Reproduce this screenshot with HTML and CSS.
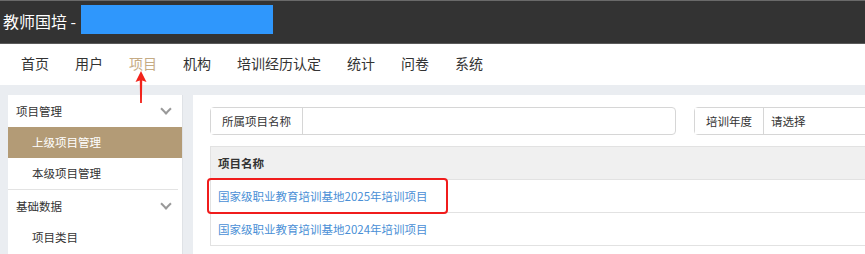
FILE: index.html
```html
<!DOCTYPE html>
<html lang="zh-CN">
<head>
    <meta charset="UTF-8">
    <title>教师国培</title>
    <link rel="stylesheet" href="styles.css">
</head>
<body>

<header class="topbar">
    <span class="brand">教师国培 -</span>
    <span class="brand-mask"></span>
</header>

<nav class="mainnav">
    <a>首页</a>
    <a>用户</a>
    <a class="active">项目
        <!-- annotation arrow -->
        <svg class="mark-arrow" width="14" height="33" viewBox="0 0 14 33">
            <path d="M7 0 L12.5 11 L8.2 9.5 L7.9 32 L6.1 32 L5.8 9.5 L1.5 11 Z" fill="#f2231b"/>
        </svg>
    </a>
    <a>机构</a>
    <a>培训经历认定</a>
    <a>统计</a>
    <a>问卷</a>
    <a>系统</a>
</nav>

<div class="page">
    <aside class="sidebar">
        <div class="group-title">项目管理 <span class="chev"></span></div>
        <div class="side-item active">上级项目管理</div>
        <div class="side-item">本级项目管理</div>
        <div class="group-title sep">基础数据 <span class="chev"></span></div>
        <div class="side-item">项目类目</div>
    </aside>

    <main class="content">
        <div class="filters">
            <div class="input-group wide">
                <span class="addon">所属项目名称</span>
                <span class="field"></span>
            </div>
            <div class="input-group">
                <span class="addon">培训年度</span>
                <span class="field select">请选择</span>
            </div>
        </div>

        <table class="grid">
            <thead>
                <tr><th>项目名称</th></tr>
            </thead>
            <tbody>
                <tr><td class="marked"><a>国家级职业教育培训基地2025年培训项目</a><span class="mark-box"></span></td></tr>
                <tr><td><a>国家级职业教育培训基地2024年培训项目</a></td></tr>
            </tbody>
        </table>
    </main>
</div>

</body>
</html>
```

FILE: styles.css
```css
body {
    margin: 0;
    font-family: "Noto Sans CJK SC", "Liberation Sans", sans-serif;
    color: #333;
    background-color: #eaedf1;
    overflow: hidden;
}
.topbar {
    height: 42px;
    background-color: #333;
    border-top: 1px solid #6a6a6a;
    border-bottom: 1px solid #5a5a5a;
    display: flex;
    align-items: center;
    padding-left: 3px;
}
.brand {
    color: #fff;
    font-size: 16px;
    line-height: 1;
    margin-top: -3px;
}
.brand-mask {
    width: 192px;
    height: 29px;
    margin-left: 5px;
    margin-top: -5px;
    background-color: #2f97fc;
}
.mainnav {
    height: 41px;
    background-color: #fff;
    display: flex;
    align-items: center;
    padding-left: 8px;
}
.mainnav a {
    position: relative;
    font-size: 14px;
    padding: 0 13px;
    color: #333;
    line-height: 20px;
    margin-top: -4px;
}
.mainnav a.active {
    color: #c5ab84;
}
.mark-arrow {
    position: absolute;
    left: 18px;
    top: 18px;
}
.page {
    display: flex;
    gap: 10px;
    padding: 10px 0 0 8px;
    height: 159px;
}
.sidebar {
    width: 174px;
    flex: none;
    background-color: #fff;
    border-right: 1px solid #dfe2e6;
    font-size: 11.5px;
}
.group-title {
    height: 32px;
    display: flex;
    align-items: center;
    justify-content: space-between;
    padding: 0 12px 0 8px;
}
.group-title.sep {
    border-top: 1px solid #e3e3e3;
    margin-right: 4px;
    padding-right: 8px;
}
.chev {
    width: 6px;
    height: 6px;
    border-right: 2px solid #999;
    border-bottom: 2px solid #999;
    transform: rotate(45deg);
    margin-top: -5px;
}
.side-item {
    height: 31px;
    line-height: 31px;
    padding-left: 24px;
}
.side-item.active {
    background-color: #b39b76;
    color: #fff;
}
.content {
    flex: 1;
    background-color: #fff;
    padding: 12px 0 0 17px;
    font-size: 11.5px;
}
.filters {
    display: flex;
    gap: 18px;
    height: 28px;
}
.input-group {
    display: flex;
    border: 1px solid #d6d6d6;
    border-radius: 4px;
    width: 200px;
}
.input-group.wide {
    width: 464px;
}
.addon {
    padding: 0 11px;
    line-height: 26px;
    border-right: 1px solid #d6d6d6;
    background-color: #fff;
}
.field {
    flex: 1;
    line-height: 26px;
    padding-left: 7px;
}
.grid {
    margin-top: 11px;
    border-collapse: collapse;
    width: 680px;
}
.grid th, .grid td {
    text-align: left;
    border: 1px solid #e2e2e2;
    border-right: none;
    height: 32px;
    padding: 0 0 0 7px;
}
.grid th {
    background-color: #f0f0f0;
    font-weight: bold;
}
.grid td a {
    color: #4a8fd6;
}
.marked {
    position: relative;
}
.mark-box {
    position: absolute;
    left: -4px;
    top: -2px;
    width: 237px;
    height: 32px;
    border: 2px solid #f01c1c;
    border-radius: 4px;
}
```
